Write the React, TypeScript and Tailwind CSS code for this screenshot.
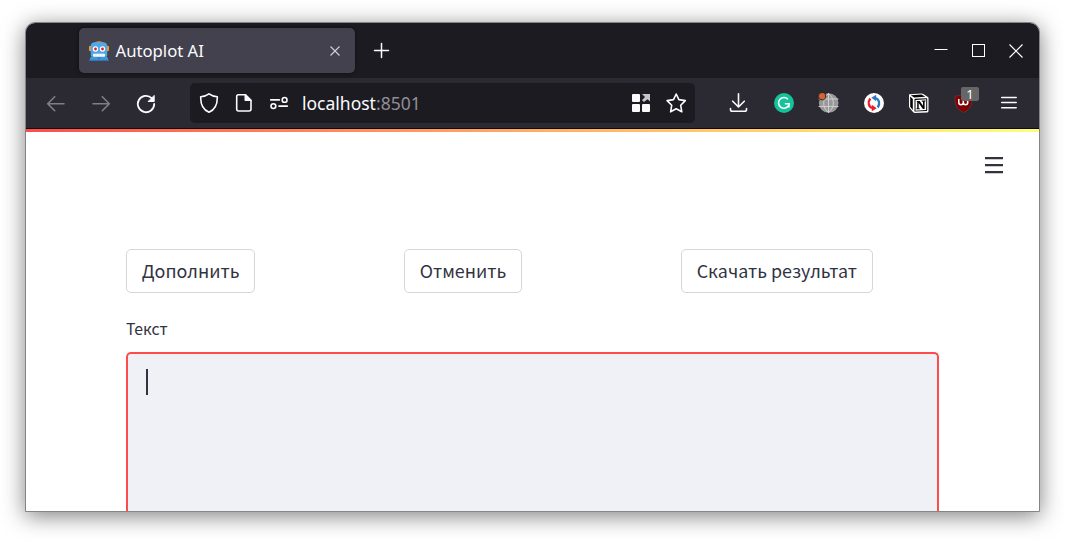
import type { ReactNode } from "react";

function Icon({ children, className = "" }: { children: ReactNode; className?: string }) {
  return (
    <svg
      width="21"
      height="20"
      viewBox="0 0 21 20"
      fill="none"
      strokeWidth="1.6"
      strokeLinecap="round"
      strokeLinejoin="round"
      className={"shrink-0 stroke-current " + className}
    >
      {children}
    </svg>
  );
}

function Cell({ children }: { children: ReactNode }) {
  return <div className="relative flex w-[45px] shrink-0 items-center justify-center">{children}</div>;
}

function Robot() {
  return (
    <svg width="20" height="20" viewBox="0 0 20 20" className="shrink-0">
      <path d="M4.500 2.200Q10-1.500 15.500 2.200L14.500 3Q10 1 5.500 3Z" fill="#f59b1c" />
      <rect x="0" y="4.800" width="3" height="5.500" rx="1.300" fill="#f59b1c" />
      <rect x="17" y="4.800" width="3" height="5.500" rx="1.300" fill="#f59b1c" />
      <path d="M1.800 5Q1.800 1.200 6 1.200H14Q18.200 1.200 18.200 5V15H1.800Z" fill="#4da8ea" />
      <path d="M2.500 15H17.500Q19.500 17 19.500 20H0.500Q0.500 17 2.500 15Z" fill="#4398db" />
      <path d="M0.500 18.700H19.500V20H0.500ZM7.500 16.500H12.500L10 18.500Z" fill="#3277b5" />
      <circle cx="6.500" cy="8" r="2.700" fill="#fff" />
      <circle cx="13.500" cy="8" r="2.700" fill="#fff" />
      <circle cx="6.500" cy="8" r="1.400" fill="#e01b35" />
      <circle cx="13.500" cy="8" r="1.400" fill="#e01b35" />
      <rect x="4" y="12.800" width="12" height="3" rx="1" fill="#fff" />
      <path d="M7 12.800V16M10 12.800V16M13 12.800V16" stroke="#b5c7d6" strokeWidth=".6" />
    </svg>
  );
}

function TitleBar() {
  return (
    <div className="flex h-[55px] shrink-0 items-center bg-[#1c1b22] pl-[53px] text-[#fbfbfe]">
      <div className="flex h-[45px] w-[276px] items-center rounded-[5px] bg-[#42414d] pl-[10px] shadow-[0_0_4px_rgba(0,0,0,0.5)]">
        <Robot />
        <span className="ml-[6.500px] mt-[2px] font-['Noto_Sans',sans-serif] text-[16.700px] leading-none">Autoplot AI</span>
        <svg width="12" height="12" viewBox="0 0 12 12" className="ml-auto mr-[14px]" stroke="#d0d0d6" strokeWidth="1.100">
          <path d="M1.500 1.500L10.500 10.500M10.500 1.500L1.500 10.500" />
        </svg>
      </div>
      <svg width="17" height="17" viewBox="0 0 17 17" className="ml-[18px]" stroke="#fbfbfe" strokeWidth="1.500" strokeLinecap="round">
        <path d="M8.500 1.500V15.500M1.500 8.500H15.500" />
      </svg>
      <div className="ml-auto mr-[16px] flex items-center gap-[24px]">
        <svg width="14" height="14" viewBox="0 0 14 14" stroke="#fff">
          <path d="M.500 5.500H13.500" />
        </svg>
        <svg width="13" height="14" viewBox="0 0 13 14" stroke="#fff" fill="none">
          <rect x=".5" y=".5" width="12" height="12" />
        </svg>
        <svg width="14" height="14" viewBox="0 0 14 14" stroke="#fff" strokeWidth="1.200">
          <path d="M.500 .500L13.500 13.500M13.500 .500L.500 13.500" />
        </svg>
      </div>
    </div>
  );
}

function AddressBar() {
  return (
    <div className="ml-[22px] flex h-10 w-[505px] shrink-0 items-center rounded-[5px] bg-[#1c1b22] px-2 text-[#fbfbfe]">
      <Icon>
        <path d="M11 .800C13.300 2.500 16 3.400 19.300 3.800C19.500 11 17.500 16.500 11 19.200C4.500 16.500 2.500 11 2.700 3.800C6 3.400 8.700 2.500 11 .800Z" />
      </Icon>
      <Icon className="ml-[14px]">
        <path d="M5.500 1.800H12.500L18 7.200V16Q18 18 16 18H5.500Q3.700 18 3.700 16V3.800Q3.700 1.800 5.500 1.800Z" />
        <path d="M12.300 2V7.200H17.500Z" fill="currentColor" />
      </Icon>
      <Icon className="ml-[14px]">
        <path d="M2.700 6.900H11.400M10.900 13.100H19.400" />
        <circle cx="16.600" cy="6.900" r="2.400" />
        <circle cx="5.400" cy="13.100" r="2.400" />
      </Icon>
      <span className="ml-[13px] mt-[2px] font-['Noto_Sans',sans-serif] text-[17.500px] leading-none">
        localhost<span className="text-[#8f8e95]">:8501</span>
      </span>
      <Icon className="ml-auto">
        <g stroke="none" fill="#fbfbfe">
          <rect x="1" y="1" width="8" height="8" rx="1" />
          <rect x="1" y="11" width="8" height="8" rx="1" />
          <rect x="11" y="11" width="8" height="8" rx="1" />
        </g>
        <path d="M11 1H19V8.500L16.500 6.200L13 9L11 7.200L14 4Z" fill="#c5c4ca" stroke="none" />
      </Icon>
      <Icon className="ml-[14px]">
        <path d="M10.200 1L12.900 6.600L19.300 7.600L14.700 12.300L15.800 18.800L10.200 15.800L4.600 18.800L5.700 12.300L1.100 7.600L7.500 6.600Z" />
      </Icon>
    </div>
  );
}

function Toolbar() {
  return (
    <div className="flex h-[51px] shrink-0 items-center border-b border-[#0c0c0d] bg-[#2b2a33] pl-[7px] text-[#fbfbfe]">
      <Cell>
        <Icon className="text-[#807f86]">
          <path d="M19 10.700H3M9.700 3.700L2.700 10.700L9.700 17.700" />
        </Icon>
      </Cell>
      <Cell>
        <Icon className="text-[#807f86]">
          <path d="M3 10.700H19M12.300 3.700L19.300 10.700L12.300 17.700" />
        </Icon>
      </Cell>
      <Cell>
        <Icon className="translate-x-[0.5px] translate-y-[1px]">
          <path d="M18.700 10A8.200 8.200 0 1 1 16.200 4.100" strokeWidth="1.800" />
          <path d="M18.700 1.800V7.500H13Z" fill="currentColor" strokeWidth="1" />
        </Icon>
      </Cell>
      <AddressBar />
      <div className="ml-[21px] flex h-full items-center">
        <Cell>
          <Icon>
            <path d="M10.500 .800V13.500M4.700 8.200L10.500 14L16.300 8.200M2.500 15.500V16.500Q2.500 18.300 4.300 18.300H16.700Q18.500 18.300 18.500 16.500V15.500" />
          </Icon>
        </Cell>
        <Cell>
          <Icon>
            <circle cx="11" cy="10" r="10" fill="#15c39a" stroke="none" />
            <path d="M14.900 6.200A5.400 5.400 0 1 0 15.500 12.800M11.800 10.800H16V14.500" strokeLinecap="butt" strokeLinejoin="miter" />
          </Icon>
        </Cell>
        <Cell>
          <Icon>
            <circle cx="10.700" cy="10" r="9.800" fill="#999" stroke="none" />
            <path d="M10.500 0V20M1 6H20M1 13.500H20M10.500 .500C4 5 4 15 10.500 19.500C17 15 17 5 10.500 .500" stroke="#ceced0" strokeWidth="1" />
            <circle cx="4" cy="3.200" r="3.700" fill="#d9622d" stroke="#2b2a33" strokeWidth="1" />
          </Icon>
        </Cell>
        <Cell>
          <Icon>
            <circle cx="11" cy="10" r="10" fill="#fff" stroke="none" />
            <path d="M14.700 14.500C17.500 10.500 16 6 12.500 5" stroke="#2b7bb9" strokeWidth="2.300" strokeLinecap="butt" />
            <path d="M8.300 4.800L13.200 1.800V8.300Z" fill="#2b7bb9" stroke="none" />
            <path d="M7.300 5.500C4.500 9 5.500 14 9.500 15" stroke="#ed1c24" strokeWidth="2.300" strokeLinecap="butt" />
            <path d="M13.700 15.200L8.800 18.300V11.800Z" fill="#ed1c24" stroke="none" />
          </Icon>
        </Cell>
        <Cell>
          <Icon>
            <path d="M1.500 1.200L13.500 .400Q14.500 .400 15.300 .900L19.500 3.800Q20.500 4.300 20.500 5.200V18Q20.500 19.300 19.300 19.400L7 20Q5.800 20 5 19L1.600 15Q1 14 1 13V2Q1 1.300 1.500 1.200Z" fill="#fff" stroke="none" />
            <path d="M2.800 2.200L13.500 1.500L17.300 3.800L6.200 4.500ZM2.200 3.500L4.800 6V17L2.200 13.800ZM7.200 5.800L18.500 5.200Q19.200 5.200 19.200 6V17.300Q19.200 18 18.500 18L7.200 18.600Q6.500 18.600 6.500 18V6.800Q6.500 5.900 7.200 5.800Z" fill="#050505" stroke="none" />
            <path d="M7.500 6.900L18.200 6.300V17.100L7.500 17.700Z" fill="#fff" stroke="none" />
            <path d="M8.700 7.900H11.700L15 12.800V8.700L13.800 8.400V7.500H17.500V8.300L16.600 8.700V16H14.900L10.700 10V15.200L11.900 15.500V16.300H8.400V15.600L9.200 15.200V9L8.700 8.500Z" fill="#050505" stroke="none" />
          </Icon>
        </Cell>
        <Cell>
          <Icon>
            <path d="M10.500 .500C13 2.300 16 3.100 19 3.300C19.200 11 18 16 10.500 19.500C3 16 1.800 11 2 3.300C5 3.100 8 2.300 10.500 .500Z" fill="#800000" stroke="#67373c" strokeWidth=".8" />
            <path d="M5.800 6.500V9.200Q5.800 11.700 8 11.700Q10.300 11.700 10.300 9.200V7M10.300 9.200Q10.300 11.700 12.500 11.700Q14.800 11.700 14.800 9.200Q14.800 6.800 12.500 6.800" strokeWidth="1.500" />
          </Icon>
          <span className="absolute -top-[6px] left-[20px] flex h-[14px] w-[18px] items-center justify-center rounded-[2px] bg-[#666] font-['Noto_Sans',sans-serif] text-[13px] leading-none text-white">1</span>
        </Cell>
        <Cell>
          <Icon>
            <path d="M3.700 4.500H18.200M3.700 9.600H18.200M3.700 14.700H18.200" strokeWidth="1.500" />
          </Icon>
        </Cell>
      </div>
    </div>
  );
}

function Button({ children }: { children: ReactNode }) {
  return (
    <button className="flex h-[44px] items-center justify-center whitespace-nowrap rounded-[5px] border border-[#d6d6d9] bg-white px-[14.700px] pb-px text-[17.900px] leading-none">
      {children}
    </button>
  );
}

export default function App() {
  return (
    <div className="h-[540px] w-[1065px] overflow-hidden bg-white pl-[25px] pt-[22px]">
      <div className="flex h-[490px] w-[1015px] flex-col overflow-hidden rounded-t-[10px] border border-[#858585] bg-white shadow-[0_4px_22px_rgba(0,0,0,0.5)]">
        <TitleBar />
        <Toolbar />
        <div className="h-[3px] shrink-0 bg-linear-to-r from-[#ff4b4b] to-[#fffd80]" />
        <main className="flex min-h-0 flex-1 flex-col font-['Source_Sans_Pro','Noto_Sans_CJK_SC',sans-serif] text-[#31333f]">
          <div className="flex h-[117px] shrink-0 justify-end pr-[35px] pt-[24px]">
            <svg width="20" height="18" viewBox="0 0 20 18" fill="#31333f">
              <path d="M1 1H19V3.300H1ZM1 8H19V10.300H1ZM1 15H19V17.300H1Z" />
            </svg>
          </div>
          <div className="ml-[100px] grid shrink-0 grid-cols-[278px_277px_258px] justify-items-start">
            <Button>Дополнить</Button>
            <Button>Отменить</Button>
            <Button>Скачать результат</Button>
          </div>
          <label className="ml-[100px] mt-[26px] block h-[33px] shrink-0 text-[15.800px] leading-[20px]">Текст</label>
          <div className="mx-[100px] flex-1 rounded-t-[5px] border-2 border-b-0 border-[#ff4b4b] bg-[#f0f1f6] pl-[18px] pt-[15px]">
            <div className="h-[26px] w-[2px] bg-[#31333f]" />
          </div>
        </main>
      </div>
    </div>
  );
}
